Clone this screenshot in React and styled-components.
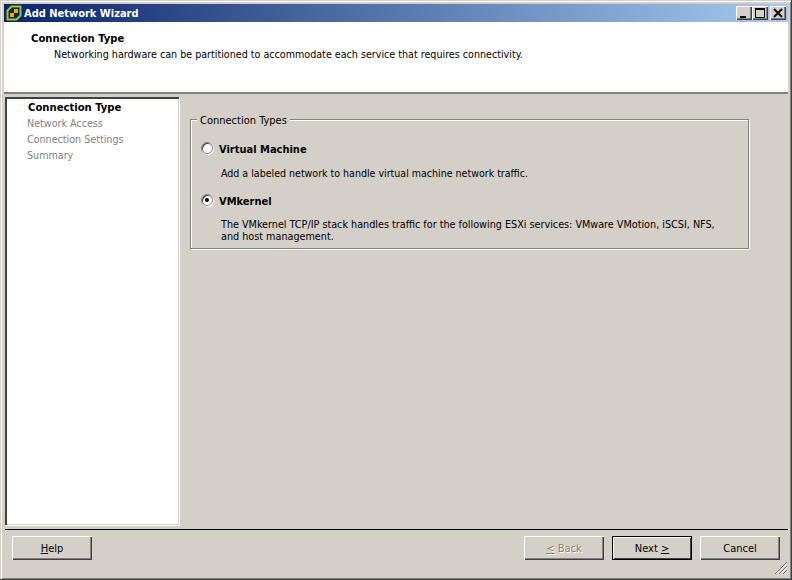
import styled, { createGlobalStyle } from 'styled-components'

const uiFont = '"DejaVu Sans Condensed", "DejaVu Sans", Tahoma, sans-serif'

const GlobalStyle = createGlobalStyle`
  html, body {
    margin: 0;
    padding: 0;
    background: #d4d0c8;
  }
  * {
    box-sizing: border-box;
  }
`

export default function App() {
  return (
    <>
      <GlobalStyle />
      <Window>
        <TitleBar>
          <Logo />
          <TitleText>Add Network Wizard</TitleText>
          <TitleButtons>
            <CaptionButton><MinGlyph /></CaptionButton>
            <CaptionButton><MaxGlyph /></CaptionButton>
            <CloseButton><CloseGlyph /></CloseButton>
          </TitleButtons>
        </TitleBar>
        <Banner>
          <BannerTitle>Connection Type</BannerTitle>
          <BannerText>Networking hardware can be partitioned to accommodate each service that requires connectivity.</BannerText>
        </Banner>
        <Middle>
          <Steps>
            <Step $active>Connection Type</Step>
            <Step>Network Access</Step>
            <Step>Connection Settings</Step>
            <Step>Summary</Step>
          </Steps>
          <Content>
            <GroupBox>
              <Legend>Connection Types</Legend>
              <Option>
                <Radio />
                <OptionLabel>Virtual Machine</OptionLabel>
              </Option>
              <OptionText $size="10.55px">Add a labeled network to handle virtual machine network traffic.</OptionText>
              <Option $second>
                <Radio $checked />
                <OptionLabel>VMkernel</OptionLabel>
              </Option>
              <OptionText $size="10.72px">
                The VMkernel TCP/IP stack handles traffic for the following ESXi services: VMware VMotion, iSCSI, NFS,
                <br />
                and host management.
              </OptionText>
            </GroupBox>
          </Content>
        </Middle>
        <Footer>
          <WizardButton><u>H</u>elp</WizardButton>
          <FooterRight>
            <WizardButton $disabled><u>&lt;</u> Back</WizardButton>
            <WizardButton $default>Next <u>&gt;</u></WizardButton>
            <WizardButton>Cancel</WizardButton>
          </FooterRight>
        </Footer>
        <Grip />
      </Window>
    </>
  )
}

function Logo() {
  return (
    <LogoSvg viewBox="0 0 18 18">
      <path d="M6 1h11v11l-5 5H1V6z" fill="#16243f" />
      <path d="M6.5 2.5h9v9l-4 4h-9v-9z" fill="none" stroke="#8fca3e" strokeWidth="2" strokeLinejoin="round" />
      <rect x="9" y="5" width="4" height="4" fill="#f2a51e" />
      <rect x="5" y="9" width="4" height="4" fill="#f2a51e" />
    </LogoSvg>
  )
}

function MinGlyph() {
  return <GlyphSvg viewBox="0 0 12 12"><rect x="2" y="9" width="6" height="2" fill="#000" /></GlyphSvg>
}

function MaxGlyph() {
  return (
    <GlyphSvg viewBox="0 0 12 12">
      <path d="M1.5 2.5h9v8h-9z" fill="none" stroke="#000" />
      <rect x="1" y="1" width="10" height="2" fill="#000" />
    </GlyphSvg>
  )
}

function CloseGlyph() {
  return (
    <GlyphSvg viewBox="0 0 12 12">
      <path d="M2 2l8 8M10 2l-8 8" stroke="#000" strokeWidth="1.8" fill="none" />
    </GlyphSvg>
  )
}

function Grip() {
  return (
    <GripSvg viewBox="0 0 14 14">
      <path d="M13 1L1 13M13 5L5 13M13 9L9 13" stroke="#707070" fill="none" />
      <path d="M13 2.5L2.5 13M13 6.5L6.5 13M13 10.5L10.5 13" stroke="#fff" fill="none" />
    </GripSvg>
  )
}

const Window = styled.div`
  position: relative;
  display: flex;
  flex-direction: column;
  width: 792px;
  height: 580px;
  padding: 4px 3px 4px 4px;
  overflow: hidden;
  background: #d4d0c8;
  border-right: 1px solid #404040;
  border-bottom: 1px solid #404040;
  box-shadow: inset 1px 1px 0 #d4d0c8, inset 2px 2px 0 #fff, inset -1px -1px 0 #808080;
  font-family: ${uiFont};
  font-size: 10.65px;
`

const TitleBar = styled.div`
  display: flex;
  align-items: center;
  flex: none;
  height: 18px;
  padding: 0 2px 0 1px;
  background: linear-gradient(90deg, #0a246a, #a6caf0);
`

const LogoSvg = styled.svg`
  flex: none;
  width: 18px;
  height: 18px;
`

const TitleText = styled.span`
  margin-left: 1px;
  color: #fff;
  font-weight: 700;
  font-size: 11px;
  white-space: nowrap;
`

const TitleButtons = styled.div`
  display: flex;
  margin-left: auto;
`

const CaptionButton = styled.div`
  display: flex;
  width: 16px;
  height: 14px;
  align-items: center;
  justify-content: center;
  background: #d4d0c8;
  box-shadow: inset 1px 1px 0 #fff, inset -1px -1px 0 #404040, inset -2px -2px 0 #808080;
`

const CloseButton = styled(CaptionButton)`
  margin-left: 2px;
`

const GlyphSvg = styled.svg`
  width: 12px;
  height: 12px;
`

const Banner = styled.div`
  flex: none;
  height: 72px;
  padding: 10px 0 0 27px;
  background: #fff;
  border-bottom: 2px solid #808080;
`

const BannerTitle = styled.div`
  color: #000;
  font-size: 11.2px;
  font-weight: 700;
  line-height: 13px;
`

const BannerText = styled.div`
  margin: 3px 0 0 23px;
  color: #000;
  line-height: 13px;
  white-space: nowrap;
`

const Middle = styled.div`
  display: flex;
  flex: 1;
  min-height: 0;
  margin-top: 3px;
`

const Steps = styled.div`
  flex: none;
  width: 174px;
  margin-left: 1px;
  padding: 1px 0 0 21px;
  background: #fff;
  border-top: 2px solid #404040;
  border-left: 2px solid #404040;
  box-shadow: 1px 1px 0 #fff, inset -1px -1px 0 #d4d0c8;
`

const Step = styled.div`
  height: 16px;
  margin-left: ${(props) => (props.$active ? '0' : '-1px')};
  line-height: 16px;
  color: ${(props) => (props.$active ? '#000' : '#808080')};
  font-size: ${(props) => (props.$active ? '11.2px' : '10.65px')};
  font-weight: ${(props) => (props.$active ? 700 : 400)};
  white-space: nowrap;
`

const Content = styled.div`
  flex: 1;
  padding: 22px 0 0 11px;
`

const GroupBox = styled.div`
  position: relative;
  width: 559px;
  height: 130px;
  padding: 23px 0 0 10px;
  border: 1px solid #808080;
  box-shadow: 1px 1px 0 #fff, inset 1px 1px 0 #fff;
`

const Legend = styled.span`
  position: absolute;
  top: -6px;
  left: 6px;
  padding: 0 3px;
  background: #d4d0c8;
  color: #000;
  font-size: 11px;
  line-height: 13px;
`

const Option = styled.div`
  display: flex;
  align-items: center;
  height: 13px;
  margin-top: ${(props) => (props.$second ? '16px' : '0')};
`

const Radio = styled.span`
  position: relative;
  flex: none;
  width: 12px;
  height: 12px;
  margin-top: -4px;
  border-radius: 50%;
  background: #fff;
  border: 1px solid #808080;
  box-shadow: inset 1px 1px 0 #404040, 1px 1px 0 #fff;

  &::after {
    content: '';
    display: ${(props) => (props.$checked ? 'block' : 'none')};
    position: absolute;
    top: 3px;
    left: 3px;
    width: 4px;
    height: 4px;
    border-radius: 50%;
    background: #000;
  }
`

const OptionLabel = styled.span`
  margin-left: 6px;
  color: #000;
  font-size: 11px;
  font-weight: 700;
  white-space: nowrap;
`

const OptionText = styled.div`
  margin: 11px 0 0 20px;
  color: #000;
  font-size: ${(props) => props.$size};
  line-height: 12px;
  white-space: nowrap;
`

const Footer = styled.div`
  display: flex;
  flex: none;
  justify-content: space-between;
  height: 46px;
  margin: 4px 0 0 1px;
  padding: 6px 8px 0 7px;
  border-top: 1px solid #000;
`

const FooterRight = styled.div`
  display: flex;
  gap: 8px;
`

const WizardButton = styled.div`
  display: flex;
  align-items: center;
  justify-content: center;
  width: 80px;
  height: 24px;
  white-space: pre;
  background: #d4d0c8;
  font-size: 11px;
  color: ${(props) => (props.$disabled ? '#808080' : '#000')};
  text-shadow: ${(props) => (props.$disabled ? '1px 1px 0 #fff' : 'none')};
  box-shadow: ${(props) =>
    props.$default
      ? 'inset 0 0 0 1px #000, inset 2px 2px 0 #fff, inset -2px -2px 0 #404040'
      : 'inset 1px 1px 0 #fff, inset -1px -1px 0 #404040, inset -2px -2px 0 #808080'};
`

const GripSvg = styled.svg`
  position: absolute;
  right: 3px;
  bottom: 4px;
  width: 14px;
  height: 14px;
`
